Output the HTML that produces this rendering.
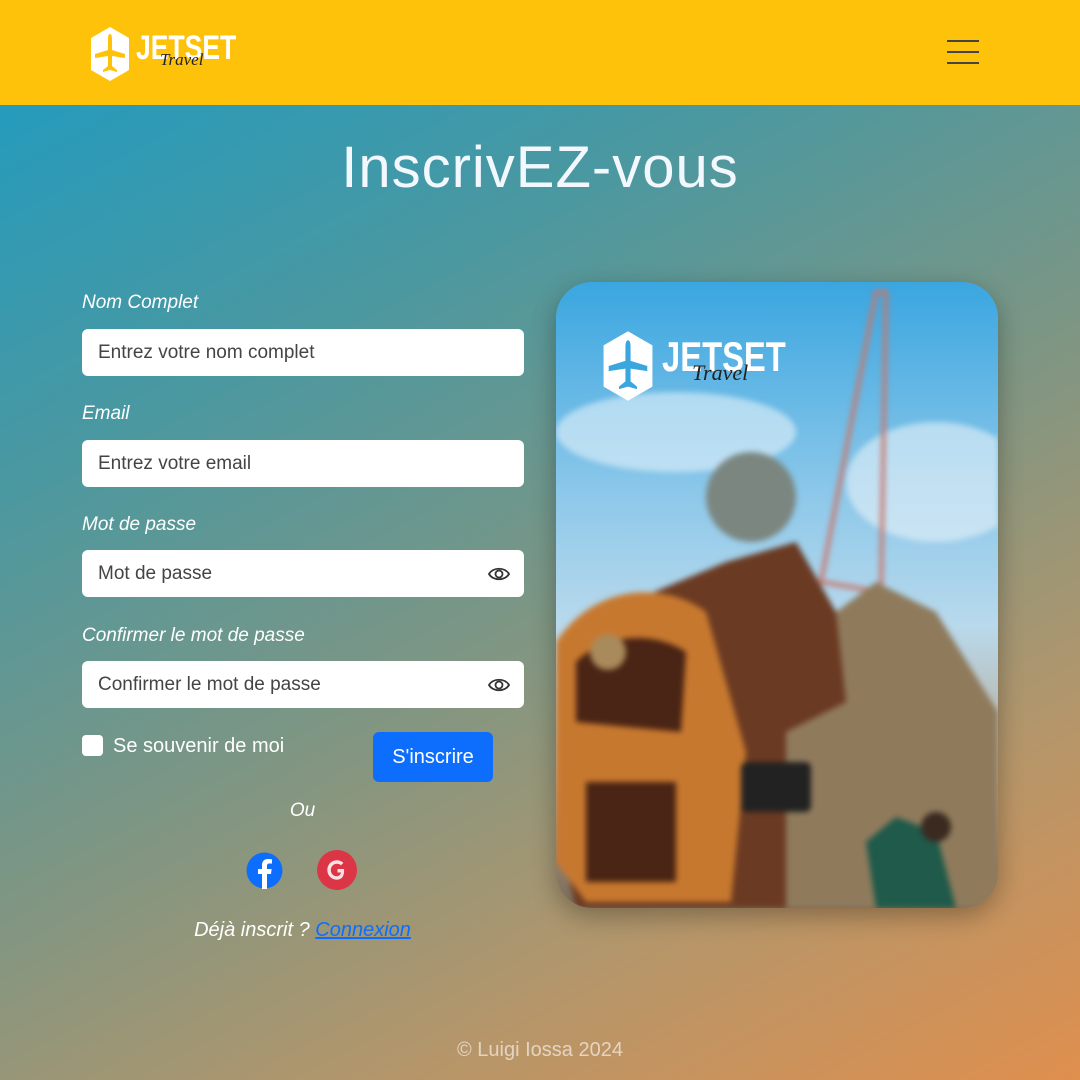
<!DOCTYPE html>
<html><head><meta charset="utf-8"><style>
*{margin:0;padding:0;box-sizing:border-box}
body{width:1080px;height:1080px;overflow:hidden;font-family:"Liberation Sans",sans-serif;position:relative;
background:linear-gradient(152deg,#1b9cc4 0%,#4b98a0 30%,#7f9683 55%,#b5966a 78%,#df8f4e 100%)}
.hdr{position:absolute;left:0;top:0;width:1080px;height:105px;background:#ffc20a}
.ham{position:absolute;left:947px;width:32px;height:2px;background:#444}
.logo{position:absolute}
.logo .t{position:absolute;color:#fff;font-weight:bold;transform-origin:0 0;transform:scaleX(.78)}
.logo .s{position:absolute;color:#222;font-style:italic;font-family:"Liberation Serif",serif}
h1{position:absolute;top:134px;left:0;width:1080px;text-align:center;color:#f3f8ff;font-weight:normal;font-size:58px;letter-spacing:1px}
.lbl{position:absolute;left:82px;color:#fff;font-style:italic;font-size:19px}
.inp{position:absolute;left:82px;width:442px;height:47px;background:#fff;border-radius:6px;font-size:19px;color:#444;padding:13px 16px}
.eye{position:absolute;right:14px;top:14px}
.card{position:absolute;left:556px;top:282px;width:442px;height:626px;border-radius:36px;overflow:hidden;box-shadow:0 8px 25px rgba(0,0,0,.3);
background:linear-gradient(180deg,#3aa6e0 0%,#8fc9ea 35%,#b9d9ec 55%,#b9a58c 80%,#7a6a58 100%)}
</style></head><body>
<div class="hdr">
 <div class="logo" style="left:90px;top:26px;width:160px;height:56px">
  <svg width="40" height="56" viewBox="0 0 40 56" style="position:absolute;left:0;top:0"><path d="M20 1 L39 12 L39 44 L20 55 L1 44 L1 12Z" fill="#fff"/><path d="M20 8 C22 8 22 12 22 14 L22 24 L35 28 L35 32 L22 30 L22 40 L27 44 L27 46 L20 44 L13 46 L13 44 L18 40 L18 30 L5 32 L5 28 L18 24 L18 14 C18 12 18 8 20 8Z" fill="#ffc20a"/></svg>
  <div class="t" style="left:46px;top:3px;font-size:34px">JETSET</div>
  <div class="s" style="left:70px;top:24px;font-size:17px">Travel</div>
 </div>
 <div class="ham" style="top:40px"></div><div class="ham" style="top:51px"></div><div class="ham" style="top:62px"></div>
</div>
<h1>InscrivEZ-vous</h1>
<div class="lbl" style="top:292px">Nom Complet</div>
<div class="inp" style="top:329px">Entrez votre nom complet</div>
<div class="lbl" style="top:403px">Email</div>
<div class="inp" style="top:440px">Entrez votre email</div>
<div class="lbl" style="top:514px">Mot de passe</div>
<div class="inp" style="top:550px">Mot de passe<svg class="eye" width="22" height="20" viewBox="0 0 22 20"><path d="M1 10 C5 3 17 3 21 10 C17 17 5 17 1 10Z" fill="none" stroke="#333" stroke-width="1.8"/><circle cx="11" cy="10" r="3.5" fill="none" stroke="#333" stroke-width="1.8"/></svg></div>
<div class="lbl" style="top:625px">Confirmer le mot de passe</div>
<div class="inp" style="top:661px">Confirmer le mot de passe<svg class="eye" width="22" height="20" viewBox="0 0 22 20"><path d="M1 10 C5 3 17 3 21 10 C17 17 5 17 1 10Z" fill="none" stroke="#333" stroke-width="1.8"/><circle cx="11" cy="10" r="3.5" fill="none" stroke="#333" stroke-width="1.8"/></svg></div>
<div style="position:absolute;left:82px;top:735px;width:21px;height:21px;background:#fff;border-radius:4px"></div>
<div style="position:absolute;left:113px;top:735px;color:#fff;font-size:20px">Se souvenir de moi</div>
<div style="position:absolute;left:373px;top:732px;width:120px;height:50px;background:#0d6efd;border-radius:6px;color:#fff;font-size:20px;text-align:center;line-height:50px">S'inscrire</div>
<div style="position:absolute;left:0;width:605px;top:800px;text-align:center;color:#fff;font-style:italic;font-size:19px">Ou</div>
<svg style="position:absolute;left:246px;top:852px" width="37" height="37" viewBox="0 0 37 37"><circle cx="18.5" cy="18.5" r="18" fill="#0d6efd"/><path d="M21 37 V22 H25 L25.6 17 H21 V14 C21 12.5 21.6 11.5 23.5 11.5 H26 V7.3 C25 7.2 23.6 7 22 7 C18.4 7 16 9.2 16 13.2 V17 H12 V22 H16 V37Z" fill="#fff"/></svg>
<svg style="position:absolute;left:317px;top:850px" width="40" height="40" viewBox="0 0 40 40"><circle cx="20" cy="20" r="20" fill="#dc3545"/><path d="M27 19 H20.5 V22.5 H24.2 C23.4 25 21.6 26.3 19.8 26.3 C16.3 26.3 13.8 23.5 13.8 20 C13.8 16.5 16.4 13.7 19.8 13.7 C21.5 13.7 22.9 14.3 24 15.3 L26.4 12.9 C24.7 11.3 22.4 10.3 19.8 10.3 C14.5 10.3 10.3 14.6 10.3 20 C10.3 25.4 14.5 29.7 19.8 29.7 C25.3 29.7 27.6 25.3 27 19Z" fill="#fff" opacity=".85"/></svg>
<div style="position:absolute;left:0;width:605px;top:919px;text-align:center;color:#fff;font-style:italic;font-size:20px">Déjà inscrit ? <span style="color:#0d6efd;text-decoration:underline">Connexion</span></div>
<div class="card">
 <svg width="442" height="626" viewBox="0 0 442 626" style="position:absolute;left:0;top:0;filter:blur(3px)">
  <ellipse cx="120" cy="150" rx="120" ry="40" fill="#e4f1fa" opacity=".6"/>
  <ellipse cx="380" cy="200" rx="90" ry="60" fill="#e8f2f8" opacity=".6"/>
  <path d="M265 300 L320 10 L330 10 L325 310Z" fill="none" stroke="#c8766a" stroke-width="4"/>
  <path d="M200 626 L230 420 L280 330 L320 300 L380 330 L442 430 L442 626Z" fill="#8f7a5c"/>
  <path d="M50 330 L170 280 L240 260 L280 330 L290 420 L230 450 L230 626 L20 626 L0 540 L0 380Z" fill="#6b3a22"/>
  <ellipse cx="195" cy="215" rx="45" ry="45" fill="#7b8680"/>
  <path d="M0 360 C40 300 110 300 150 330 L190 470 L175 620 L30 620 L0 580Z" fill="#c7782f"/>
  <path d="M20 380 C50 350 100 350 130 370 L125 450 L20 440Z" fill="#4a2414"/>
  <path d="M30 500 L120 500 L120 600 L30 600Z" fill="#4a2414"/>
  <circle cx="52" cy="370" r="18" fill="#a98a5a"/>
  <rect x="185" y="480" width="70" height="50" rx="6" fill="#222"/>
  <path d="M320 626 L310 560 L340 535 L380 550 L400 626Z" fill="#1f5a4a"/>
  <circle cx="380" cy="545" r="15" fill="#3a2a20"/>
 </svg>
 <div class="logo" style="left:46px;top:48px;width:200px;height:72px">
  <svg width="52" height="72" viewBox="0 0 40 56" style="position:absolute;left:0;top:0"><path d="M20 1 L39 12 L39 44 L20 55 L1 44 L1 12Z" fill="#fff"/><path d="M20 8 C22 8 22 12 22 14 L22 24 L35 28 L35 32 L22 30 L22 40 L27 44 L27 46 L20 44 L13 46 L13 44 L18 40 L18 30 L5 32 L5 28 L18 24 L18 14 C18 12 18 8 20 8Z" fill="#3aa6e0"/></svg>
  <div class="t" style="left:60px;top:3px;font-size:42px">JETSET</div>
  <div class="s" style="left:90px;top:30px;font-size:22px">Travel</div>
 </div>
</div>
<div style="position:absolute;left:0;width:1080px;top:1039px;text-align:center;color:rgba(255,255,255,.6);font-size:20px">© Luigi Iossa 2024</div>
</body></html>
